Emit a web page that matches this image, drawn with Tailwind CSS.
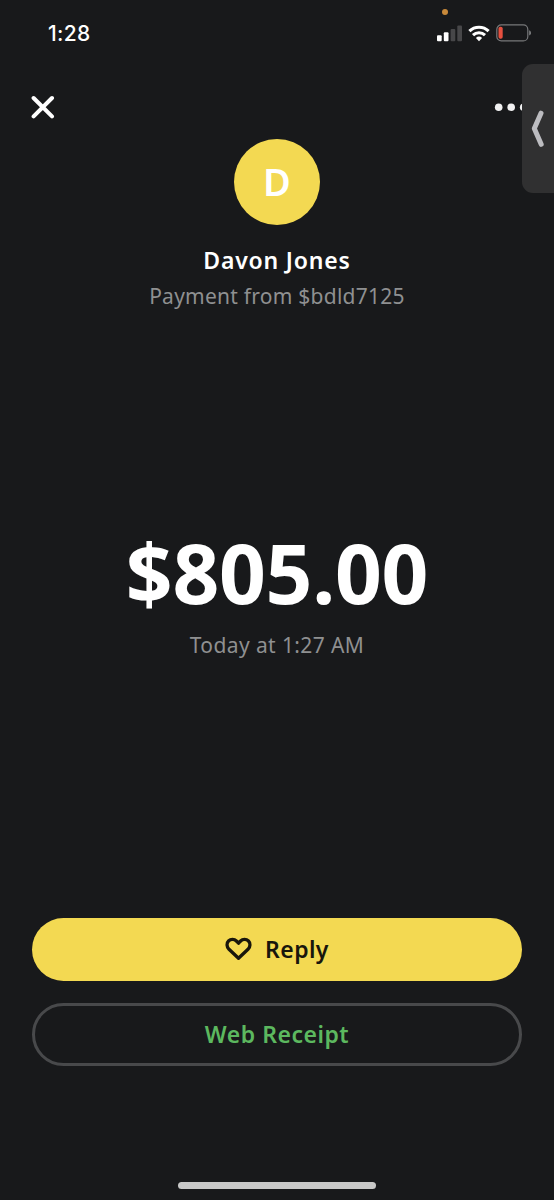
<!DOCTYPE html>
<html lang="en">
<head>
  <meta charset="UTF-8" />
  <meta name="viewport" content="width=device-width, initial-scale=1.0" />
  <title>Payment</title>
  <script src="https://cdn.jsdelivr.net/npm/@tailwindcss/browser@4"></script>
</head>
<body class="bg-[#18191b] text-white font-['Noto_Sans',sans-serif]">
<div class="relative w-[554px] h-[1200px] overflow-hidden flex flex-col">
  <!-- status bar -->
  <div class="h-[66px] pl-12 pr-[23px] flex items-center justify-between">
    <span class="font-['Inter',sans-serif] text-[21px] leading-none font-medium tracking-[0.3px]">1:28</span>
    <div class="flex items-center gap-[6px]">
      <svg class="w-[25px] h-[17px]" viewBox="0 0 25 17">
        <rect x="0" y="10.3" width="4.7" height="6" rx="1" fill="#fff" />
        <rect x="6.8" y="7.3" width="4.7" height="9" rx="1" fill="#fff" />
        <rect x="13.6" y="4" width="4.7" height="12.3" rx="1" fill="#474749" />
        <rect x="20.3" y="0.6" width="4.7" height="15.7" rx="1" fill="#474749" />
      </svg>
      <svg class="w-[22px] h-[17px]" viewBox="0 0 22 17" fill="none" stroke="#fff" stroke-width="3.1">
        <path d="M1.4 6.2a13.8 13.8 0 0 1 19.2 0" />
        <path d="M5 10.1a8.7 8.7 0 0 1 12 0" />
        <path d="M11 16.3 7.9 13a4.5 4.5 0 0 1 6.2 0z" fill="#fff" stroke="none" />
      </svg>
      <svg class="w-[35px] h-[18px]" viewBox="0 0 35 18">
        <rect x="0.8" y="0.9" width="31" height="16" rx="4.5" fill="none" stroke="#77787a" stroke-width="1.2" />
        <rect x="2.5" y="2.8" width="4.2" height="12" rx="1.8" fill="#e6503f" />
        <path d="M33.1 6.2q2 .9 2 2.7t-2 2.7z" fill="#77787a" />
      </svg>
    </div>
  </div>
  <span class="absolute left-[442px] top-[9px] size-[6px] rounded-full bg-[#c8893a]"></span>

  <!-- close / more -->
  <div class="h-[73px] pt-[29px] pl-[31px] pr-[26px] flex justify-between">
    <svg class="w-6 h-6" viewBox="0 0 24 24" stroke="#fff" stroke-width="4" stroke-linecap="round">
      <path d="M2.6 3 21 21.4M21 3 2.6 21.4" />
    </svg>
    <svg class="w-[34px] h-6" viewBox="0 0 34 24" fill="#f1f1f2">
      <circle cx="4.7" cy="12.2" r="3.8" /><circle cx="17.2" cy="12.2" r="3.8" /><circle cx="29.7" cy="12.2" r="3.8" />
    </svg>
  </div>

  <!-- sender -->
  <div class="flex flex-col items-center">
    <div class="size-[86px] pb-[3px] rounded-full bg-[#f3d952] flex items-center justify-center text-[38px] leading-none font-semibold">D</div>
    <h1 class="mt-[18px] h-[34px] leading-[34px] text-[23px] font-semibold tracking-[0.8px]">Davon Jones</h1>
    <p class="mt-[3px] h-8 leading-8 text-[21px] tracking-[0.25px] text-[#8f9091]">Payment from $bdld7125</p>
  </div>

  <!-- amount -->
  <div class="mt-[210px] flex flex-col items-center">
    <div class="h-[100px] leading-[100px] text-[82px] font-bold tracking-[-0.3px]">$805.00</div>
    <p class="mt-[7px] h-8 leading-8 text-[21px] tracking-[0.4px] text-[#8f9091]">Today at 1:27 AM</p>
  </div>

  <!-- actions -->
  <div class="mt-auto px-8 pb-[134px] flex flex-col gap-[22px]">
    <button class="h-[63px] rounded-full bg-[#f3d952] text-[#18160c] flex items-center justify-center gap-[13px] text-[23px] font-semibold tracking-[0.4px]">
      <svg class="w-[27px] h-6 -translate-y-px" viewBox="0 0 27 24" fill="none" stroke="#18160c" stroke-width="3.3" stroke-linejoin="round">
        <path d="M13.5 21.3 4 12.3C1.4 9.7 1.5 6 3.5 4 5.7 1.8 9.3 1.8 11.4 4L13.5 6.2 15.6 4C17.7 1.8 21.3 1.8 23.5 4 25.5 6 25.6 9.7 23 12.3Z" />
      </svg>
      <span>Reply</span>
    </button>
    <button class="h-[63px] rounded-full border-3 border-[#48494b] text-[#5cb85f] text-[23px] font-semibold tracking-[0.5px]">Web Receipt</button>
  </div>

  <!-- side drawer handle -->
  <div class="absolute left-[522px] top-[64px] w-10 h-[129px] rounded-l-[11px] bg-[#303031]">
    <svg class="w-8 h-[129px]" viewBox="0 0 32 129" fill="none" stroke="#bcbcc0" stroke-width="5" stroke-linecap="round" stroke-linejoin="round">
      <path d="M19 49.2 12.3 64.5 19.2 80.3" />
    </svg>
  </div>
  <!-- home indicator -->
  <div class="absolute left-[178px] top-[1182px] w-[198px] h-[7px] rounded-full bg-[#c8c8c8]"></div>
</div>
</body>
</html>
